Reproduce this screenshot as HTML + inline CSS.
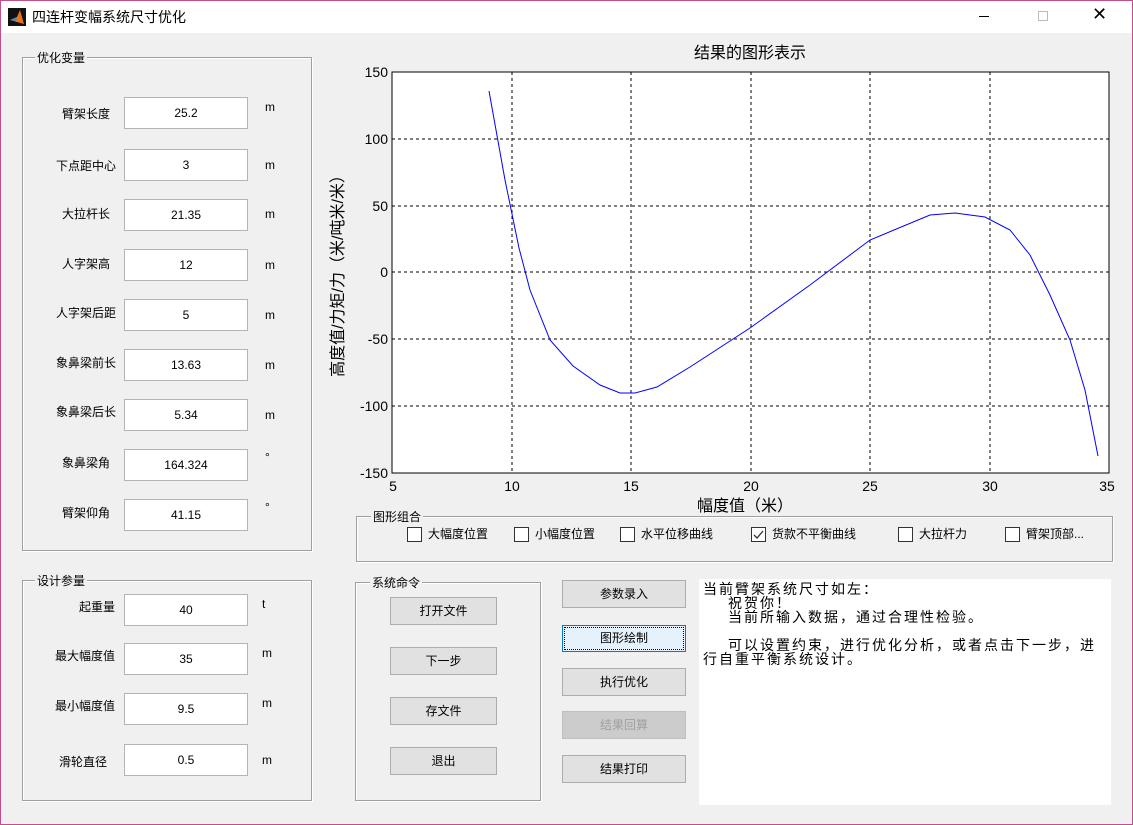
<!DOCTYPE html>
<html><head><meta charset="utf-8"><style>
*{margin:0;padding:0;box-sizing:border-box}
body{width:1133px;height:825px;background:#f0f0f0;position:relative;overflow:hidden;font-family:"Liberation Sans","Noto Sans CJK SC",sans-serif;font-size:12px;color:#000}
.a{position:absolute}
.win{left:0;top:0;width:1133px;height:825px;border:1px solid #c0508a}
.title{left:1px;top:1px;width:1131px;height:32px;background:#fff}
.grp{position:absolute;border:1px solid #a0a0a0;box-shadow:inset 1px 1px 0 #fff,1px 1px 0 #fff}
.lg{position:absolute;top:-9px;left:12px;background:#f0f0f0;padding:0 2px;font-size:12px}
.lbl{position:absolute;font-size:12px;text-align:right;width:90px}
.ed{position:absolute;background:#fff;border:1px solid #b4b4b4;width:124px;height:32px;text-align:center;line-height:30px;font-size:12px}
.u{position:absolute;font-size:12px}
.btn{position:absolute;background:#e1e1e1;border:1px solid #adadad;text-align:center;font-size:12px}
.cb{position:absolute;font-size:12px;line-height:15px}
.cb i{display:inline-block;width:15px;height:15px;border:1px solid #333;background:#fff;vertical-align:top;margin-right:6px;position:relative}
.tx div{height:14px;line-height:14px;white-space:nowrap}
.ind{padding-left:25px}
</style></head><body>
<div class="a win"></div>
<div class="a title"></div>
<svg class="a" style="left:8px;top:8px" width="18" height="18"><rect width="18" height="18" fill="#111"/><path d="M2 12 L9 9 L12 2 L16 16 Z" fill="#e8731c"/><path d="M2 12 L9 9 L8 13Z" fill="#3a8fc8"/></svg>
<div class="a" style="left:32px;top:7px;font-size:14px">四连杆变幅系统尺寸优化</div>
<div class="a" style="left:979px;top:16px;width:10px;height:1px;background:#000"></div>
<div class="a" style="left:1038px;top:11px;width:10px;height:10px;border:1px solid #bbb"></div>
<div class="a" style="left:1092px;top:4px;font-size:18px;font-weight:300">✕</div>

<div class="grp" style="left:22px;top:57px;width:290px;height:494px"><span class="lg">优化变量</span></div>
<div class="lbl" style="left:20px;top:105px">臂架长度</div><div class="ed" style="left:124px;top:97px">25.2</div><div class="u" style="left:265px;top:100px">m</div>
<div class="lbl" style="left:26px;top:157px">下点距中心</div><div class="ed" style="left:124px;top:149px">3</div><div class="u" style="left:265px;top:158px">m</div>
<div class="lbl" style="left:20px;top:205px">大拉杆长</div><div class="ed" style="left:124px;top:199px">21.35</div><div class="u" style="left:265px;top:207px">m</div>
<div class="lbl" style="left:20px;top:255px">人字架高</div><div class="ed" style="left:124px;top:249px">12</div><div class="u" style="left:265px;top:258px">m</div>
<div class="lbl" style="left:26px;top:304px">人字架后距</div><div class="ed" style="left:124px;top:299px">5</div><div class="u" style="left:265px;top:308px">m</div>
<div class="lbl" style="left:26px;top:354px">象鼻梁前长</div><div class="ed" style="left:124px;top:349px">13.63</div><div class="u" style="left:265px;top:358px">m</div>
<div class="lbl" style="left:26px;top:403px">象鼻梁后长</div><div class="ed" style="left:124px;top:399px">5.34</div><div class="u" style="left:265px;top:408px">m</div>
<div class="lbl" style="left:20px;top:454px">象鼻梁角</div><div class="ed" style="left:124px;top:449px">164.324</div><div class="u" style="left:265px;top:450px">°</div>
<div class="lbl" style="left:20px;top:504px">臂架仰角</div><div class="ed" style="left:124px;top:499px">41.15</div><div class="u" style="left:265px;top:500px">°</div>

<div class="grp" style="left:22px;top:580px;width:290px;height:221px"><span class="lg">设计参量</span></div>
<div class="lbl" style="left:25px;top:598px">起重量</div><div class="ed" style="left:124px;top:594px">40</div><div class="u" style="left:262px;top:597px">t</div>
<div class="lbl" style="left:25px;top:647px">最大幅度值</div><div class="ed" style="left:124px;top:643px">35</div><div class="u" style="left:262px;top:646px">m</div>
<div class="lbl" style="left:25px;top:697px">最小幅度值</div><div class="ed" style="left:124px;top:693px">9.5</div><div class="u" style="left:262px;top:696px">m</div>
<div class="lbl" style="left:17px;top:753px">滑轮直径</div><div class="ed" style="left:124px;top:744px">0.5</div><div class="u" style="left:262px;top:753px">m</div>

<svg class="a" style="left:320px;top:38px" width="800" height="480" font-family="Liberation Sans,Noto Sans CJK SC,sans-serif">
<g transform="translate(-320,-38)">
<rect x="392" y="72" width="717" height="401" fill="#fff" stroke="#000"/>
<g stroke="#000" stroke-dasharray="3,3" stroke-width="1">
<line x1="512" y1="72" x2="512" y2="473"/><line x1="631" y1="72" x2="631" y2="473"/><line x1="751" y1="72" x2="751" y2="473"/><line x1="870" y1="72" x2="870" y2="473"/><line x1="990" y1="72" x2="990" y2="473"/>
<line x1="392" y1="139" x2="1109" y2="139"/><line x1="392" y1="206" x2="1109" y2="206"/><line x1="392" y1="272" x2="1109" y2="272"/><line x1="392" y1="339" x2="1109" y2="339"/><line x1="392" y1="406" x2="1109" y2="406"/>
</g>
<path d="M489 91 L505 180 L519 248 L530 290 L550 340 L573 366 L600 385 L620 393 L635 393 L657 387 L690 367 L750 328 L810 285 L870 240 L930 215 L955 213 L985 217 L1010 230 L1030 255 L1050 295 L1070 340 L1085 390 L1098 456" fill="none" stroke="#0000ff"/>
<g font-size="14" text-anchor="end">
<text x="388" y="77">150</text><text x="388" y="144">100</text><text x="388" y="211">50</text><text x="388" y="277">0</text><text x="388" y="344">-50</text><text x="388" y="411">-100</text><text x="388" y="478">-150</text></g>
<g font-size="14" text-anchor="middle">
<text x="393" y="491">5</text><text x="512" y="491">10</text><text x="631" y="491">15</text><text x="751" y="491">20</text><text x="870" y="491">25</text><text x="990" y="491">30</text><text x="1107" y="491">35</text></g>
<text x="750" y="58" font-size="16" text-anchor="middle">结果的图形表示</text>
<text x="745" y="511" font-size="16" text-anchor="middle">幅度值（米）</text>
<text transform="translate(343,272) rotate(-90)" font-size="16" text-anchor="middle">高度值/力矩/力（米/吨米/米）</text>
</g></svg>

<div class="grp" style="left:356px;top:516px;width:757px;height:46px"><span class="lg" style="left:14px">图形组合</span></div>
<div class="cb" style="left:407px;top:527px"><i></i>大幅度位置</div>
<div class="cb" style="left:514px;top:527px"><i></i>小幅度位置</div>
<div class="cb" style="left:620px;top:527px"><i></i>水平位移曲线</div>
<div class="cb" style="left:751px;top:527px"><i><svg width="13" height="13" style="position:absolute;left:0;top:0"><path d="M2 7 L5 10 L11 3" fill="none" stroke="#333" stroke-width="1.3"/></svg></i>货款不平衡曲线</div>
<div class="cb" style="left:898px;top:527px"><i></i>大拉杆力</div>
<div class="cb" style="left:1005px;top:527px"><i></i>臂架顶部...</div>

<div class="grp" style="left:355px;top:582px;width:186px;height:219px"><span class="lg" style="left:14px">系统命令</span></div>
<div class="btn" style="left:390px;top:597px;width:107px;height:28px;line-height:26px">打开文件</div>
<div class="btn" style="left:390px;top:647px;width:107px;height:28px;line-height:26px">下一步</div>
<div class="btn" style="left:390px;top:697px;width:107px;height:28px;line-height:26px">存文件</div>
<div class="btn" style="left:390px;top:747px;width:107px;height:28px;line-height:26px">退出</div>

<div class="btn" style="left:562px;top:580px;width:124px;height:28px;line-height:26px">参数录入</div>
<div class="btn" style="left:562px;top:625px;width:124px;height:27px;line-height:25px;background:#e5f1fb;border:1px solid #0078d7;outline:1px dotted #000;outline-offset:-3px">图形绘制</div>
<div class="btn" style="left:562px;top:668px;width:124px;height:28px;line-height:26px">执行优化</div>
<div class="btn" style="left:562px;top:711px;width:124px;height:28px;line-height:26px;color:#a0a0a0;background:#cccccc;border-color:#bfbfbf">结果回算</div>
<div class="btn" style="left:562px;top:755px;width:124px;height:28px;line-height:26px">结果打印</div>

<div class="a tx" style="left:699px;top:579px;width:412px;height:226px;background:#fff;font-size:14px;letter-spacing:2px;padding:3px 4px;font-family:'WenQuanYi Zen Hei',sans-serif">
<div>当前臂架系统尺寸如左：</div>
<div class="ind">祝贺你！</div>
<div class="ind">当前所输入数据，通过合理性检验。</div>
<div></div>
<div class="ind">可以设置约束，进行优化分析，或者点击下一步，进</div>
<div>行自重平衡系统设计。</div>
</div>
</body></html>
